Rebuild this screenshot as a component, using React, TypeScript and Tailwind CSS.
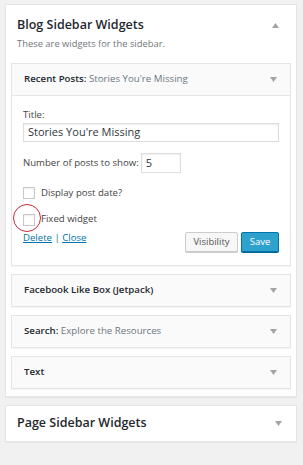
import type { ReactNode } from "react";

function Caret({ up = false }: { up?: boolean }) {
  return (
    <svg width="7" height="5" viewBox="0 0 7 5" className="shrink-0">
      <polygon points={up ? "0,5 7,5 3.5,0" : "0,0 7,0 3.5,5"} fill="#a0a5aa" />
    </svg>
  );
}

function WidgetHead({ name, title }: { name: string; title?: string }) {
  return (
    <div className="flex h-[31px] items-center justify-between pl-[12px] pr-[13px]">
      <span className="text-[9.7px] text-[#23282d]">
        <span className="font-semibold">{name}</span>
        {title && <span className="text-[#6c7781]"> {title}</span>}
      </span>
      <Caret />
    </div>
  );
}

function Widget({ children }: { children: ReactNode }) {
  return (
    <div className="border border-[#e5e5e5] bg-[#fafafa] shadow-[0_1px_1px_rgba(0,0,0,0.04)]">
      {children}
    </div>
  );
}

function Check({ label, mark = false }: { label: string; mark?: boolean }) {
  return (
    <label className="relative flex items-center gap-[6px]">
      {mark && (
        <span className="absolute left-[-10px] top-[-8px] h-[28px] w-[28px] rounded-full border border-[#c4293a]" />
      )}
      <span className="h-[12px] w-[12px] border border-[#c8c8c8] bg-white shadow-[inset_0_1px_2px_rgba(0,0,0,0.07)]" />
      <span>{label}</span>
    </label>
  );
}

export default function App() {
  return (
    <div
      className="min-h-[465px] bg-[#f1f1f1] pb-[25px] pl-[5px] pr-[6px] pt-[4px]"
      style={{ fontFamily: '"Open Sans", "Noto Sans", sans-serif' }}
    >
      {/* Blog sidebar */}
      <div className="border border-[#e5e5e5] bg-white px-[5px] pb-[7px] shadow-[0_1px_1px_rgba(0,0,0,0.04)]">
        <div className="flex items-center justify-between pl-[6px] pr-[12px] pt-[11px]">
          <h2 className="text-[12.5px] font-semibold leading-[18px] text-[#23282d]">
            Blog Sidebar Widgets
          </h2>
          <Caret up />
        </div>
        <p className="pl-[6px] pt-[3px] text-[9.4px] leading-[14px] text-[#72777c]">
          These are widgets for the sidebar.
        </p>

        <div className="mt-[12px] flex flex-col gap-[8px]">
          <Widget>
            <WidgetHead name="Recent Posts:" title="Stories You're Missing" />
            <div className="border-t border-[#e5e5e5] bg-white px-[11px] pb-[13px] pt-[12px] text-[9.6px] text-[#444]">
              <div className="leading-[14px]">Title:</div>
              <div className="mt-[1px] flex h-[19px] items-center border border-[#ddd] bg-white pl-[4px] text-[11px] text-[#32373c] shadow-[inset_0_1px_2px_rgba(0,0,0,0.07)]">
                Stories You're Missing
              </div>
              <div className="mt-[11px] flex items-center gap-[2px]">
                <span>Number of posts to show:</span>
                <span className="flex h-[20px] w-[40px] items-center border border-[#ddd] bg-white pl-[4px] text-[11px] text-[#32373c] shadow-[inset_0_1px_2px_rgba(0,0,0,0.07)]">
                  5
                </span>
              </div>
              <div className="mt-[13px]">
                <Check label="Display post date?" />
              </div>
              <div className="mt-[12px]">
                <Check label="Fixed widget" mark />
              </div>
              <div className="mt-[2px] flex items-start justify-between">
                <div className="pt-[2px] text-[#0073aa]">
                  <span className="underline">Delete</span>
                  <span> | </span>
                  <span className="underline">Close</span>
                </div>
                <div className="flex gap-[3px] pt-[3px]">
                  <span className="flex h-[20px] w-[53px] items-center justify-center rounded-[2px] border border-[#ccc] bg-[#f7f7f7] text-[9.5px] text-[#555] shadow-[0_1px_0_#ccc]">
                    Visibility
                  </span>
                  <span className="flex h-[20px] w-[38px] items-center justify-center rounded-[2px] border border-[#0073aa] bg-[#2ea2cc] text-[9.5px] text-white shadow-[0_1px_0_#006799]">
                    Save
                  </span>
                </div>
              </div>
            </div>
          </Widget>
          <Widget>
            <WidgetHead name="Facebook Like Box (Jetpack)" />
          </Widget>
          <Widget>
            <WidgetHead name="Search:" title="Explore the Resources" />
          </Widget>
          <Widget>
            <WidgetHead name="Text" />
          </Widget>
        </div>
      </div>

      {/* Page sidebar */}
      <div className="mt-[8px] flex h-[37px] items-center justify-between border border-[#e5e5e5] bg-white pl-[11px] pr-[14px] shadow-[0_1px_1px_rgba(0,0,0,0.04)]">
        <h2 className="text-[12.5px] font-semibold text-[#23282d]">
          Page Sidebar Widgets
        </h2>
        <Caret />
      </div>
    </div>
  );
}
